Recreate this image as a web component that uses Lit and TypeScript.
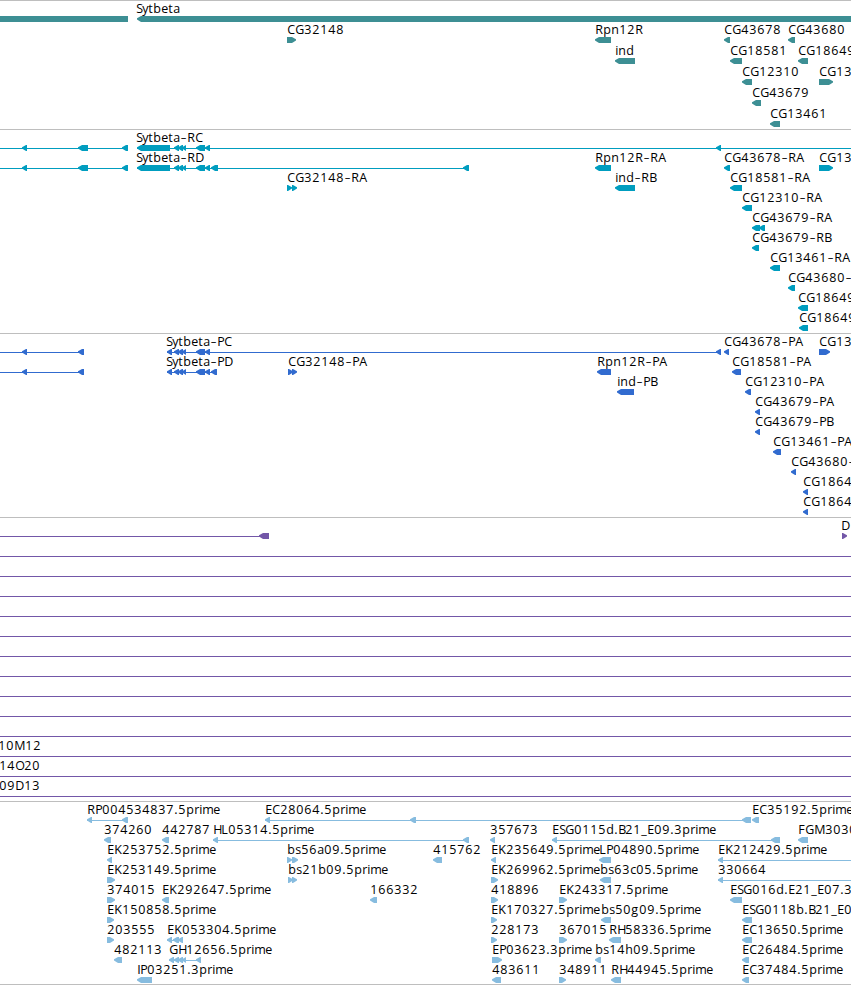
import { LitElement, html, svg, css } from "lit";
import { customElement, property } from "lit/decorators.js";

type Dir = "<" | ">" | "=";

/** One drawn feature: label, label x, strand, blocks, connecting line. */
interface Feature {
  label: string;
  x: number;
  dir: Dir;
  blocks: [number, number][];
  line?: [number, number];
}

interface Track {
  name: string;
  color: string;
  pitch: number;
  height: number;
  rows: Feature[][];
}

const f = (
  label: string,
  x: number,
  dir: Dir,
  blocks: [number, number][],
  line?: [number, number]
): Feature => ({ label, x, dir, blocks, line });

/** Single-block feature labelled at its own start. */
const l = (label: string, a: number, b: number, x = a) => f(label, x, "<", [[a, b]]);
const r = (label: string, a: number, b: number, x = a) => f(label, x, ">", [[a, b]]);
const full = (label = "", x = 0) => f(label, x, "=", [], [0, 851]);

const exons: [number, number][] = [[174, 179], [178, 183], [182, 186], [196, 205], [205, 210]];

const genes: Feature[][] = [
  [f("", 0, "=", [[0, 128]]), l("Sytbeta", 137, 851, 136)],
  [r("CG32148", 287, 296), l("Rpn12R", 595, 611), l("CG43678", 724, 730), l("CG43680", 788, 795)],
  [l("ind", 615, 635), l("CG18581", 730, 742), l("CG18649", 798, 808)],
  [l("CG12310", 742, 752), r("CG13", 819, 833)],
  [l("CG43679", 752, 761)],
  [l("CG13461", 770, 780)],
];

const transcriptTail = f("", 0, "<", [[22, 27], [78, 88], [122, 128]], [0, 128]);
const transcripts: Feature[][] = [
  [transcriptTail, f("Sytbeta-RC", 136, "<", [[137, 170], ...exons, [716, 721]], [137, 851])],
  [
    transcriptTail,
    f("Sytbeta-RD", 136, "<", [[137, 170], ...exons, [211, 218], [463, 469]], [137, 469]),
    l("Rpn12R-RA", 595, 611), l("CG43678-RA", 724, 730), r("CG13", 819, 833),
  ],
  [f("CG32148-RA", 287, ">", [[287, 292], [292, 297]]), l("ind-RB", 615, 635), l("CG18581-RA", 730, 742)],
  [l("CG12310-RA", 742, 752)],
  [f("CG43679-RA", 752, "<", [[752, 760], [759, 765]])],
  [l("CG43679-RB", 752, 759)],
  [l("CG13461-RA", 770, 780)],
  [l("CG43680-", 788, 795)],
  [l("CG18649", 798, 808)],
  [l("CG18649", 799, 808)],
];

const codingTail = f("", 0, "<", [[22, 27], [78, 84]], [0, 84]);
const proteins: Feature[][] = [
  [
    codingTail,
    f("Sytbeta-PC", 166, "<", [[167, 172], ...exons, [716, 721]], [167, 721]),
    l("CG43678-PA", 724, 729), r("CG13", 819, 830),
  ],
  [
    codingTail,
    f("Sytbeta-PD", 166, "<", [[167, 172], ...exons, [211, 217]], [167, 217]),
    f("CG32148-PA", 288, ">", [[288, 293], [292, 297]]),
    l("Rpn12R-PA", 597, 611), l("CG18581-PA", 732, 741),
  ],
  [l("ind-PB", 617, 634), l("CG12310-PA", 745, 751)],
  [l("CG43679-PA", 755, 760)],
  [l("CG43679-PB", 755, 760)],
  [l("CG13461-PA", 773, 781)],
  [l("CG43680-", 791, 796)],
  [l("CG1864", 803, 808)],
  [l("CG1864", 803, 808)],
];

const clones: Feature[][] = [
  [f("", 0, "<", [[259, 269]], [0, 269]), r("D", 842, 847, 841)],
  ...Array.from({ length: 10 }, () => [full()]),
  [full("10M12", -2)],
  [full("14O20", -1)],
  [full("09D13", -1)],
];

const ests: Feature[][] = [
  [
    f("RP004534837.5prime", 87, "<", [[87, 92], [122, 128]], [87, 128]),
    f("EC28064.5prime", 265, "<", [[265, 270], [410, 416], [742, 751]], [265, 751]),
    l("EC35192.5prime", 752, 759),
  ],
  [
    l("374260", 104, 111), l("442787", 162, 169),
    f("HL05314.5prime", 213, "<", [[213, 218], [463, 469]], [213, 469]),
    l("357673", 490, 495),
    f("ESG0115d.B21_E09.3prime", 552, "<", [[552, 557], [771, 780]], [552, 780]),
    l("FGM3030", 798, 808),
  ],
  [
    l("EK253752.5prime", 107, 112), f("bs56a09.5prime", 287, ">", [[287, 292], [292, 298]]),
    l("415762", 433, 442), l("EK235649.5prime", 491, 496), l("LP04890.5prime", 599, 611),
    f("EK212429.5prime", 718, "<", [[718, 723]], [718, 851]),
  ],
  [
    r("EK253149.5prime", 107, 115), f("bs21b09.5prime", 288, ">", [[288, 293], [292, 297]]),
    r("EK269962.5prime", 491, 498), l("bs63c05.5prime", 600, 611),
    f("330664", 718, "<", [[718, 723]], [718, 851]),
  ],
  [
    r("374015", 107, 115), l("EK292647.5prime", 162, 169), l("166332", 370, 377),
    r("418896", 491, 498), r("EK243317.5prime", 559, 567), l("ESG016d.E21_E07.3", 730, 742),
  ],
  [
    r("EK150858.5prime", 107, 114), r("EK170327.5prime", 491, 497),
    l("bs50g09.5prime", 601, 611), l("ESG0118b.B21_E0", 742, 752),
  ],
  [
    r("203555", 107, 114), f("EK053304.5prime", 167, "<", [[167, 172], [173, 179], [178, 183]], [167, 183]),
    r("228173", 491, 497), r("367015", 559, 567), l("RH58336.5prime", 609, 621), l("EC13650.5prime", 742, 752),
  ],
  [
    l("482113", 114, 122),
    f("GH12656.5prime", 169, "<", [[169, 174], [174, 179], [178, 183], [182, 186], [196, 201]], [169, 201]),
    r("EP03623.3prime", 492, 502), l("bs14h09.5prime", 595, 601), l("EC26484.5prime", 742, 749),
  ],
  [
    l("IP03251.3prime", 137, 152), l("483611", 492, 501), r("348911", 559, 566),
    l("RH44945.5prime", 611, 621), l("EC37484.5prime", 742, 749),
  ],
];

const tracks: Track[] = [
  { name: "genes", color: "#3d8f94", pitch: 21, height: 129, rows: genes },
  { name: "transcripts", color: "#009dbf", pitch: 20, height: 204, rows: transcripts },
  { name: "proteins", color: "#316bcf", pitch: 20, height: 184, rows: proteins },
  { name: "clones", color: "#7357a8", pitch: 20, height: 284, rows: clones },
  { name: "ests", color: "#87bcdf", pitch: 20, height: 183, rows: ests },
];

/** Whole-pixel advance of each label character. */
const advance: Record<string, number> = {
  C: 8, G: 9, R: 8, P: 7, A: 8, B: 7, D: 9, E: 7, F: 7, H: 8, I: 3, K: 8, L: 7, M: 11, O: 9, S: 6,
  "-": 7, ".": 4, _: 6, a: 7, b: 8, c: 6, d: 8, e: 7, g: 8, h: 8, i: 3, m: 11, n: 8, p: 8, r: 5, s: 6, t: 5, y: 6,
};

/** Splits a label at its hyphens and gives each run its glyph positions. */
const runs = (label: string, x: number) => {
  let at = x + 0.2;
  return label
    .split(/(-)/)
    .filter((text) => text)
    .map((text) => {
      const dash = text === "-";
      const xs = [...text].map((ch) => {
        const here = dash ? at + 0.4 : at;
        at += advance[ch] ?? 8;
        return here.toFixed(1);
      });
      return { text, dash, xs: xs.join(" ") };
    });
};

@customElement("genome-track")
export class GenomeTrack extends LitElement {
  static styles = css`
    :host {
      display: block;
      border-top: 1px solid #bebebe;
      box-sizing: border-box;
      overflow: hidden;
    }
    svg {
      display: block;
      width: 100%;
    }
    text {
      font-family: "Open Sans", "Noto Sans", sans-serif;
      font-size: 12.5px;
      fill: #000;
    }
    .dash {
      font-size: 19px;
      font-weight: 300;
    }
  `;

  @property({ attribute: false }) track!: Track;

  private block(dir: Dir, a: number, b: number, y: number) {
    const top = y + 15;
    const bottom = y + 21;
    const head = Math.min(4, b - a);
    const points =
      dir === "="
        ? `${a},${top} ${b},${top} ${b},${bottom} ${a},${bottom}`
        : dir === "<"
          ? `${a},${y + 17.2} ${a + head},${top} ${b},${top} ${b},${bottom} ${a + head},${bottom} ${a},${y + 18.6}`
          : `${a},${top} ${b - head},${top} ${b},${y + 17.2} ${b},${y + 18.6} ${b - head},${bottom} ${a},${bottom}`;
    return svg`<polygon points=${points}></polygon>`;
  }

  private label(item: Feature, y: number) {
    return svg`<text>${runs(item.label, item.x).map(
      (run) =>
        svg`<tspan class=${run.dash ? "dash" : "run"} x=${run.xs} y=${run.dash ? y + 13.5 : y + 12}>${run.text}</tspan>`
    )}</text>`;
  }

  private feature(item: Feature, y: number) {
    return svg`
      ${item.line
        ? svg`<rect x=${item.line[0]} y=${y + 18} width=${item.line[1] - item.line[0]} height="1"></rect>`
        : null}
      ${item.blocks.map(([a, b]) => this.block(item.dir, a, b, y))}
      ${item.label ? this.label(item, y) : null}
    `;
  }

  render() {
    const { rows, pitch, height, color } = this.track;
    return html`<svg height=${height - 1} fill=${color}>
      ${rows.map((row, i) => row.map((item) => this.feature(item, i * pitch)))}
    </svg>`;
  }
}

@customElement("app-root")
export class AppRoot extends LitElement {
  static styles = css`
    :host {
      display: block;
      background: #fff;
      overflow: hidden;
    }
    .tracks {
      display: flex;
      flex-direction: column;
      border-bottom: 1px solid #bebebe;
    }
  `;

  render() {
    return html`<div class="tracks">
      ${tracks.map((t) => html`<genome-track .track=${t}></genome-track>`)}
    </div>`;
  }
}
